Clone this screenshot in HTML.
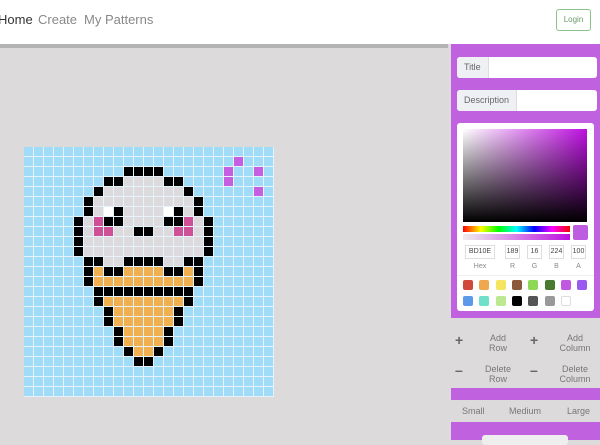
<!DOCTYPE html><html><head><style>
*{box-sizing:border-box;margin:0;padding:0}
body{width:600px;height:440px;overflow:hidden;background:#dcdadb;font-family:"Liberation Sans",sans-serif;position:relative}
.hdr{position:absolute;left:0;top:0;width:600px;height:44px;background:#fff}
.shadow{position:absolute;left:0;top:44px;width:448px;height:4px;background:#b4b3b4}
.nav{position:absolute;top:12px;font-size:13px;color:#888}
.login{position:absolute;left:556px;top:9px;width:35px;height:22px;border:1px solid #8bc08b;border-radius:3px;font-size:8px;color:#6a9a6a;text-align:center;line-height:20px}
.grid{position:absolute;left:24px;top:147px;width:250px;height:250px;background:#e8f4fb;display:grid;grid-template-columns:repeat(25,10px);grid-template-rows:repeat(25,10px)}
.grid div{border-right:1px solid #e6f3fb;border-bottom:1px solid #e6f3fb;background:#a0dbf8}
.panel{position:absolute;left:451px;top:44px;width:149px;height:274px;background:#c062e0}
.inp{position:absolute;left:457px;width:140px;height:21px;background:#fff;border-radius:3px;font-size:9px;color:#666}
.inp span{display:inline-block;height:21px;line-height:21px;padding:0 7px;background:#eff0f3;border-right:1px solid #ddd;border-radius:3px 0 0 3px}
.picker{position:absolute;left:457px;top:123px;width:137px;height:188px;background:#fff;border-radius:3px}
.sat{position:absolute;left:6px;top:6px;width:124px;height:93px;background:linear-gradient(to top,#000,transparent),linear-gradient(to right,#fff,#bd10e0)}
.hue{position:absolute;left:6px;top:103px;width:107px;height:6px;background:linear-gradient(to right,#f00,#ff0,#0f0,#0ff,#00f,#f0f,#f00)}
.alpha{position:absolute;left:6px;top:111px;width:107px;height:6px;background:linear-gradient(to right,#eee,#bd10e0)}
.sw{position:absolute;left:116px;top:102px;width:15px;height:15px;background:#bd5ee0;border-radius:2px}
.f{position:absolute;top:122px;height:14px;border:1px solid #ddd;font-size:7px;color:#444;text-align:center;line-height:12px}
.l{position:absolute;top:140px;font-size:7px;color:#888;text-align:center}
.c{position:absolute;width:10px;height:10px;border-radius:2px}
.btn{position:absolute;font-size:9px;color:#777;text-align:center;line-height:10px}
.pm{position:absolute;font-size:14px;color:#666;font-weight:bold}
</style></head><body>
<div class="hdr"></div><div class="shadow"></div>
<div class="nav" style="left:-2px;color:#333">Home</div>
<div class="nav" style="left:38px">Create</div>
<div class="nav" style="left:84px">My Patterns</div>
<div class="login">Login</div>
<div class="grid" id="g"></div>
<div class="panel"></div>
<div class="inp" style="top:57px"><span>Title</span></div>
<div class="inp" style="top:90px"><span>Description</span></div>
<div class="picker">
<div class="sat"></div><div class="hue"></div><div class="alpha"></div><div class="sw"></div>
<div class="f" style="left:8px;width:30px">BD10E</div>
<div class="f" style="left:48px;width:15px">189</div>
<div class="f" style="left:70px;width:15px">16</div>
<div class="f" style="left:92px;width:15px">224</div>
<div class="f" style="left:114px;width:15px">100</div>
<div class="l" style="left:8px;width:30px">Hex</div>
<div class="l" style="left:48px;width:15px">R</div>
<div class="l" style="left:70px;width:15px">G</div>
<div class="l" style="left:92px;width:15px">B</div>
<div class="l" style="left:114px;width:15px">A</div>
<div style="position:absolute;left:0;top:152px;width:137px;border-top:1px solid #eee"></div>
</div>
<div id="cs"></div>
<div class="pm" style="left:455px;top:332px">+</div>
<div class="btn" style="left:480px;top:333px;width:36px">Add<br>Row</div>
<div class="pm" style="left:530px;top:332px">+</div>
<div class="btn" style="left:555px;top:333px;width:40px">Add<br>Column</div>
<div class="pm" style="left:455px;top:362px">–</div>
<div class="btn" style="left:478px;top:364px;width:40px">Delete<br>Row</div>
<div class="pm" style="left:530px;top:362px">–</div>
<div class="btn" style="left:555px;top:364px;width:40px">Delete<br>Column</div>
<div style="position:absolute;left:451px;top:388px;width:149px;height:12px;background:#c062e0"></div>
<div class="btn" style="left:462px;top:406px">Small</div>
<div class="btn" style="left:509px;top:406px">Medium</div>
<div class="btn" style="left:567px;top:406px">Large</div>
<div style="position:absolute;left:451px;top:422px;width:149px;height:18px;background:#c062e0"></div>
<div style="position:absolute;left:482px;top:435px;width:86px;height:10px;background:#eee;border-radius:3px"></div>
<script>
var K='#000',G='#dcdadd',W='#fff',P='#d05098',O='#f0b050',V='#c55ee0';
var m={};function s(r,c,col){m[r+','+c]=col}
function row(r,a){a.forEach(function(x){for(var c=x[0];c<=x[1];c++)s(r,c,x[2])})}
s(1,21,V);s(2,20,V);s(3,20,V);s(2,23,V);s(4,23,V);
row(2,[[10,13,K]]);
row(3,[[8,9,K],[10,13,G],[14,15,K]]);
row(4,[[7,7,K],[8,15,G],[16,16,K]]);
row(5,[[6,6,K],[7,16,G],[17,17,K]]);
row(6,[[6,6,K],[7,7,G],[8,8,W],[9,9,K],[10,13,G],[14,14,W],[15,15,K],[16,16,G],[17,17,K]]);
row(7,[[5,5,K],[6,6,G],[7,7,P],[8,9,K],[10,13,G],[14,15,K],[16,16,P],[17,17,G],[18,18,K]]);
row(8,[[5,5,K],[6,6,G],[7,8,P],[9,10,G],[11,12,K],[13,14,G],[15,16,P],[17,17,G],[18,18,K]]);
row(9,[[5,5,K],[6,17,G],[18,18,K]]);
row(10,[[5,5,K],[6,17,G],[18,18,K]]);
row(11,[[6,7,K],[8,9,G],[10,13,K],[14,15,G],[16,17,K]]);
row(12,[[6,6,K],[7,7,O],[8,9,K],[10,13,O],[14,15,K],[16,16,O],[17,17,K]]);
row(13,[[6,6,K],[7,16,O],[17,17,K]]);
row(14,[[7,16,K]]);
row(15,[[7,7,K],[8,15,O],[16,16,K]]);
row(16,[[8,8,K],[9,14,O],[15,15,K]]);
row(17,[[8,8,K],[9,14,O],[15,15,K]]);
row(18,[[9,9,K],[10,13,O],[14,14,K]]);
row(19,[[9,9,K],[10,13,O],[14,14,K]]);
row(20,[[10,10,K],[11,12,O],[13,13,K]]);
row(21,[[11,12,K]]);
var h='';for(var r=0;r<25;r++)for(var c=0;c<25;c++){var col=m[r+','+c];h+='<div'+(col?' style="background:'+col+'"':'')+'></div>'}
document.getElementById('g').innerHTML=h;
var cols=['#d0483a','#f0a850','#f5e460','#8b5a3c','#8ed858','#4a7a30','#c058e0','#9a5af0','#5a9ae8','#70e0c8','#bce890','#000','#555','#999','#fff'];
var o='';cols.forEach(function(c,i){var x=463+(i%8)*16.3,y=280+Math.floor(i/8)*16;o+='<div class="c" style="left:'+x+'px;top:'+y+'px;background:'+c+';'+(c=='#fff'?'border:1px solid #ddd':'')+'"></div>'});
document.getElementById('cs').innerHTML=o;
</script>
</body></html>
